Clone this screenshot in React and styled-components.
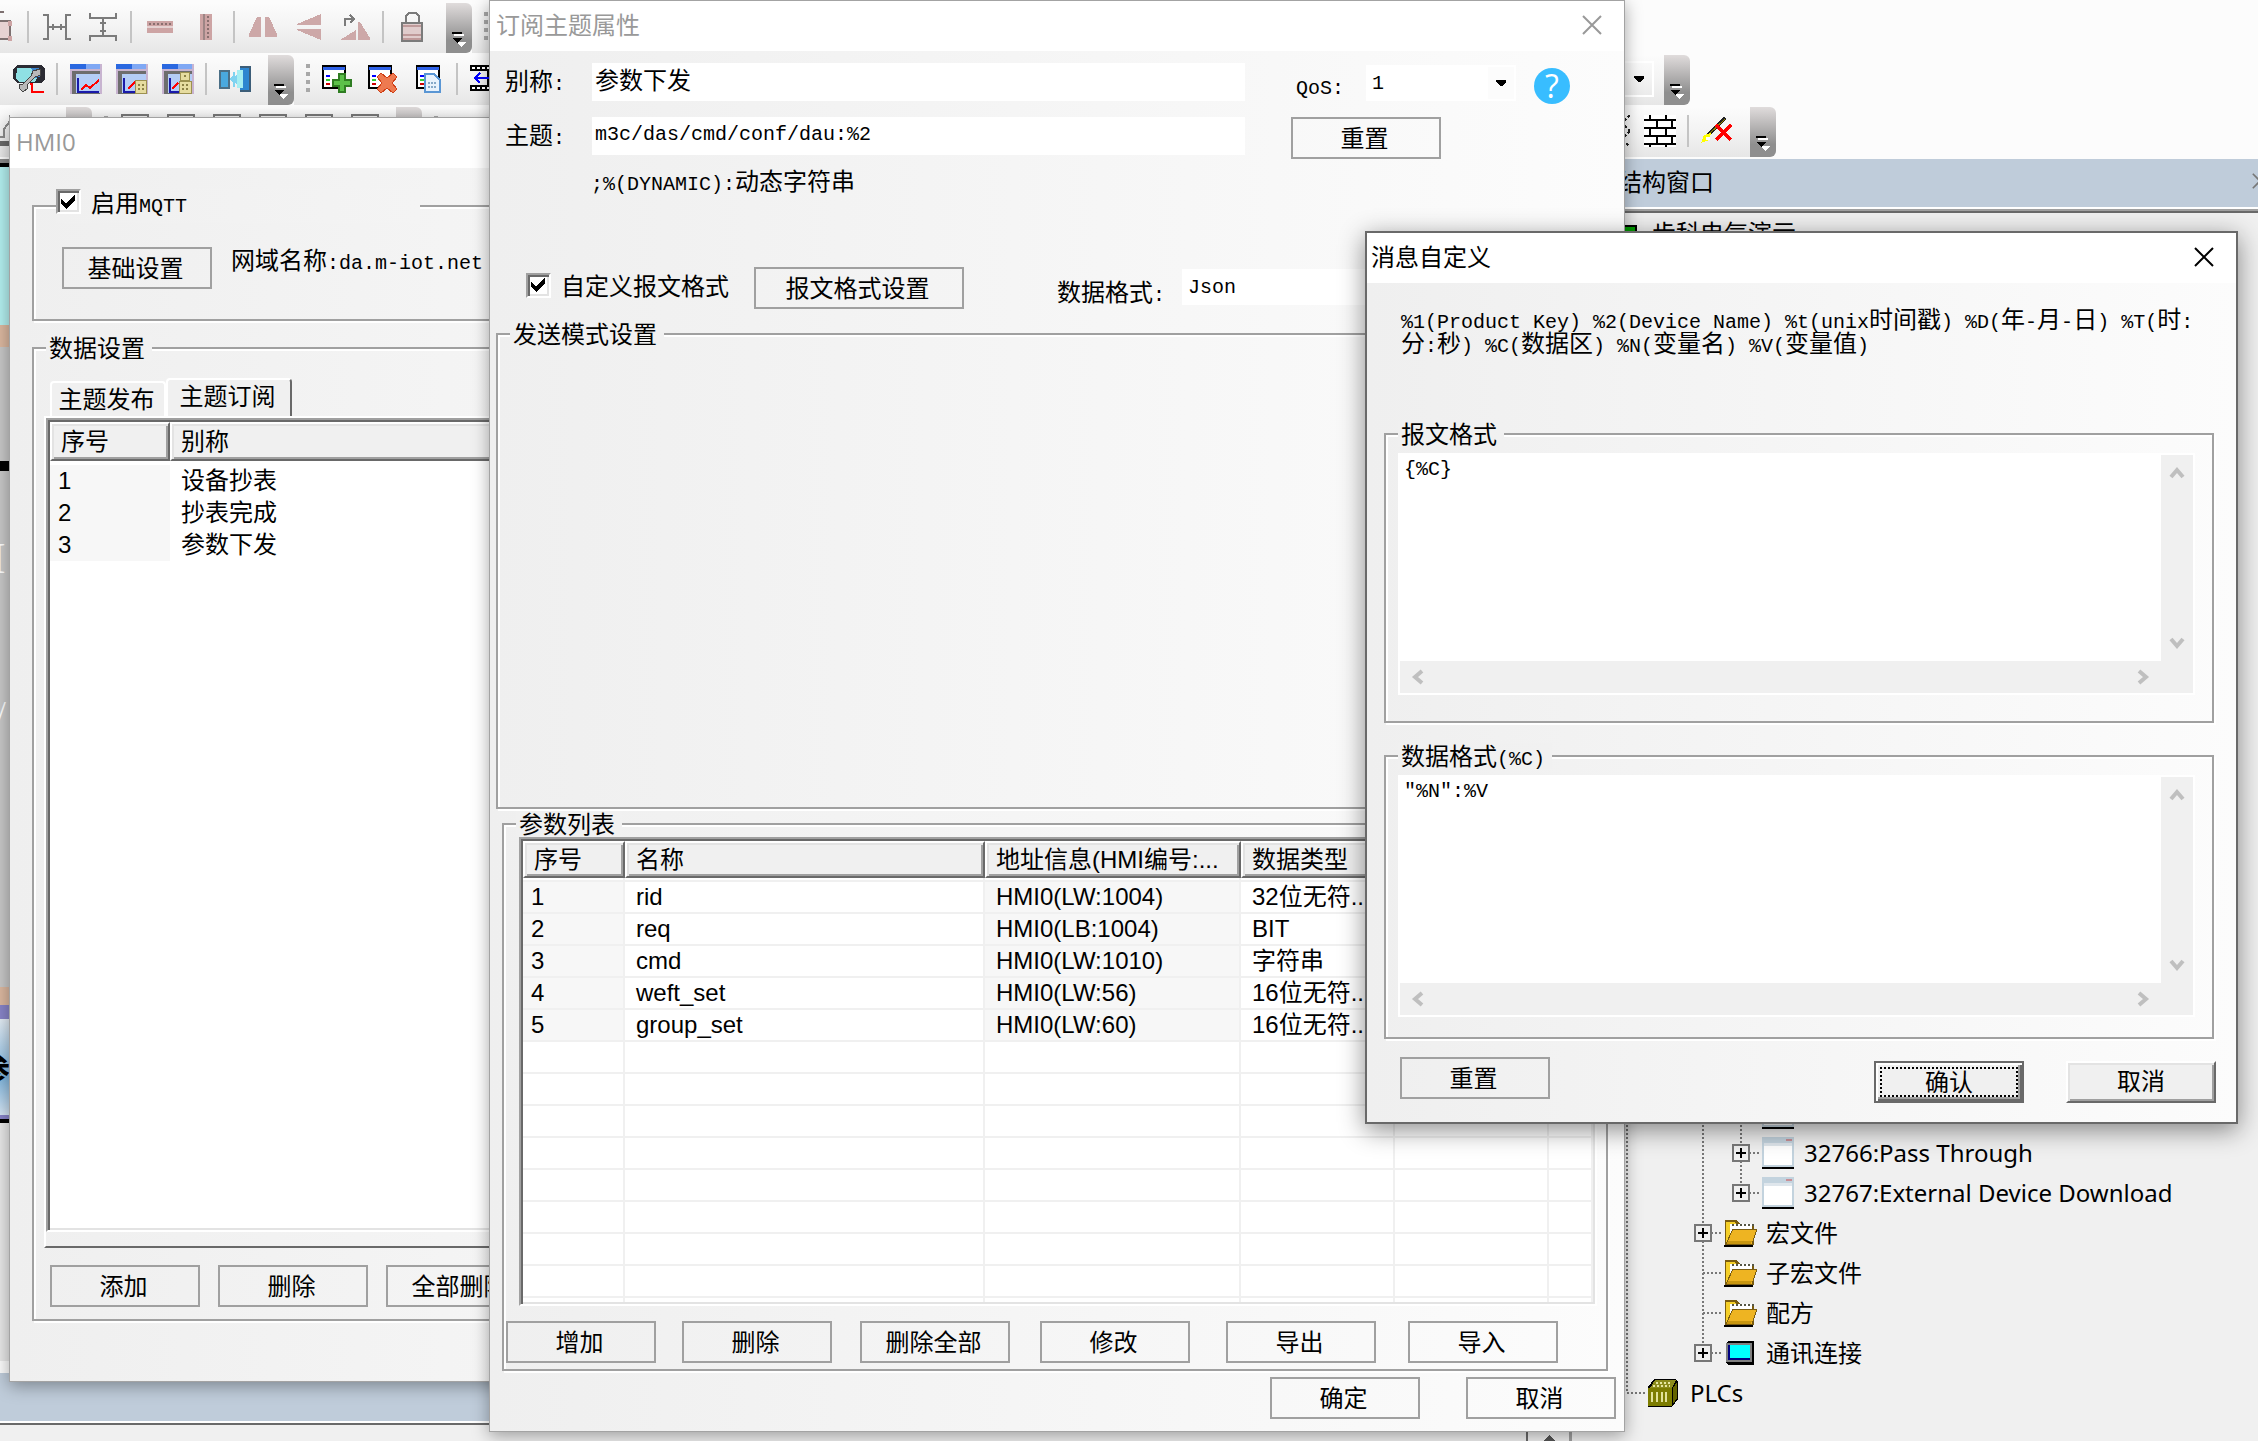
import React from "react";
import styled, { createGlobalStyle, css } from "styled-components";

const cjk = `"Noto Sans CJK SC", sans-serif`;

const GlobalStyle = createGlobalStyle`
  * {
    box-sizing: border-box;
  }

  body {
    margin: 0;
    overflow: hidden;
    background: #fcfcfc;
    color: #000;
    font: 24px/24px ${cjk};
  }

  button,
  input,
  select,
  textarea {
    font: inherit;
    color: inherit;
    margin: 0;
    padding: 0;
    border: 0;
    border-radius: 0;
  }

  svg {
    display: block;
    flex: none;
  }
`;

// half-width characters take exactly half of a 24px full-width cell
const Half = styled.span`
  font-family: "Liberation Mono", monospace;
  font-size: 20px;
  line-height: 0;
`;

const T = ({ children }) => (
  <span>
    {children
      .split(/([\x20-\x7e]+)/)
      .map((part, i) => (i % 2 ? <Half key={i}>{part}</Half> : part))}
  </span>
);

/* ---------- icons ---------- */

const Icon = ({ w = 32, h = 32, children }) => (
  <svg
    width={w}
    height={h}
    viewBox={`0 0 ${w} ${h}`}
    shapeRendering="crispEdges"
    aria-hidden="true"
  >
    {children}
  </svg>
);

const LockEdge = () => (
  <Icon w={23} h={32}>
    <path d="M0 1h4M0 10h10v18H0" fill="#e6d2d2" stroke="#7d7070" strokeWidth="2" />
    <path d="M8 10h4v5H8zM8 25h4v5H8z" fill="#cda4a4" />
  </Icon>
);

const SameWidth = () => (
  <Icon w={28} h={28}>
    <path
      d="M0 2h5v24H0M28 2h-5v24h5M5 14h18M10 11v6M18 11v6"
      fill="none"
      stroke="#7b7b7b"
      strokeWidth="2"
    />
  </Icon>
);

const SameHeight = () => (
  <Icon w={28} h={28}>
    <path
      d="M1 0v5h26V0M1 28v-5h26v5M14 5v18M11 10h6M11 18h6"
      fill="none"
      stroke="#7b7b7b"
      strokeWidth="2"
    />
  </Icon>
);

const RulerH = () => (
  <Icon w={26} h={12}>
    <path d="M0 0h26v12H0z" fill="#cda4a4" />
    <path d="M2 3h22" stroke="#8a6f6f" strokeWidth="2" strokeDasharray="2 2" />
    <path d="M0 5h26v2H0z" fill="#e6d2d2" />
  </Icon>
);

const RulerV = () => (
  <Icon w={12} h={26}>
    <path d="M0 0h12v26H0z" fill="#cda4a4" />
    <path d="M8 2v22" stroke="#8a6f6f" strokeWidth="2" strokeDasharray="2 2" />
    <path d="M4 0v26" stroke="#9d8585" strokeWidth="2" />
  </Icon>
);

const FlipH = () => (
  <Icon w={28} h={20}>
    <path d="M8 0h4v20H0v-3zM16 0h4l8 17v3H16z" fill="#cda8a8" />
  </Icon>
);

const FlipV = () => (
  <Icon w={24} h={26}>
    <path d="M24 0v11H0v-1zM24 26V15H0v1z" fill="#cda8a8" />
  </Icon>
);

const Rotate = () => (
  <Icon w={30} h={26}>
    <path d="M18 8h2l10 16v2H18zM0 26l16-10v10z" fill="#cda8a8" />
    <path d="M5 12V5h9M10 1l4 4-4 4" fill="none" stroke="#7b7b7b" strokeWidth="2" />
  </Icon>
);

const Lock = () => (
  <Icon w={22} h={30}>
    <path d="M5 11V4l3-3h7l3 3v7" fill="none" stroke="#7b7b7b" strokeWidth="2" />
    <path d="M1 11h20v18H1z" fill="#e0cccc" stroke="#7b7b7b" strokeWidth="2" />
    <path d="M2 14h18M2 23h18M2 27h18" stroke="#bf9a9a" strokeWidth="2" />
  </Icon>
);

const MonitorTool = () => (
  <Icon w={32} h={30}>
    <path d="M4 1h24l4 4v10l-4 4H4l-4-4V5z" fill="#2b2b33" />
    <path d="M4 4h20l3 3-5 11H6l-3-4z" fill="#8fe0e4" />
    <path d="M18 4h8l2 8-6 2z" fill="#3d86cf" />
    <path d="M27 5l-7 2-2 5-8 8H6v4l4 4 4-3v-4l8-8 6-2z" fill="#b9b9b9" stroke="#444" />
    <path d="M17 20h2v8h12" fill="none" stroke="#f00" strokeWidth="2" />
  </Icon>
);

const ChartBase = ({ line }) => (
  <>
    <path d="M0 0h32v30H0z" fill="#c8b4d0" />
    <path d="M0 0h30v5H0z" fill="#2a68e0" />
    <path d="M16 0h14v5H16z" fill="#7fa8f4" />
    <path d="M2 7h28v23H2z" fill="#6d6d6d" />
    <path d="M6 10h24v19H6z" fill="#b4cdf6" />
    <path d="M8 14v14h21" fill="none" stroke="#1a1aaa" strokeWidth="2" />
    <path d={line} fill="none" stroke="#f00" strokeWidth="2" />
  </>
);

const Chart = () => (
  <Icon w={32} h={30}>
    <ChartBase line="M11 26l5-5 4 3 9-8" />
  </Icon>
);

const ChartPad = () => (
  <Icon w={32} h={30}>
    <ChartBase line="M12 25l7-7" />
    <path d="M19 16h11v13H19z" fill="#e6dca0" stroke="#9c9150" />
    <path d="M22 20h2v2h-2zM26 20h2v2h-2zM22 24h2v2h-2zM26 24h2v2h-2z" fill="#8c8146" />
  </Icon>
);

const ChartPads = () => (
  <Icon w={32} h={30}>
    <ChartBase line="M10 25l6-6" />
    <path d="M18 8h9v8h-9zM17 17h12v12H17z" fill="#e6dca0" stroke="#9c9150" />
    <path d="M22 11h2v2h-2zM20 20h2v2h-2zM24 20h2v2h-2zM20 24h2v2h-2zM24 24h2v2h-2z" fill="#8c8146" />
  </Icon>
);

const Transfer = () => (
  <Icon w={32} h={26}>
    <path d="M1 5h9v17H1z" fill="#49a9df" stroke="#4b6f86" strokeWidth="2" />
    <path d="M10 13l4-3v-4h2v4l7-6v19l-7-6v4h-2v-4z" fill="#7fd3f0" />
    <path d="M21 1h10v24H21" fill="#2d86d0" stroke="#3c5d78" strokeWidth="2" />
    <path d="M18 4h6v18h-6z" fill="#a5eef2" />
  </Icon>
);

const TableBase = () => (
  <>
    <path d="M1 1h22v22H1z" fill="#fff" stroke="#000" strokeWidth="2" />
    <path d="M1 2h22v3H1z" fill="#2f62e8" />
    <path d="M4 11h4" stroke="#00f" strokeWidth="2" />
    <path d="M4 15h4" stroke="#3c3" strokeWidth="2" />
    <path d="M4 19h4" stroke="#c00" strokeWidth="2" />
  </>
);

const TableAdd = () => (
  <Icon w={30} h={28}>
    <TableBase />
    <path d="M17 9h6v6h6v6h-6v6h-6v-6h-6v-6h6z" fill="#5cc04a" stroke="#2f7d22" strokeWidth="2" />
  </Icon>
);

const TableDelete = () => (
  <Icon w={30} h={28}>
    <TableBase />
    <path
      d="M9 12l4-4 6 5 6-5 4 4-5 6 5 6-4 4-6-5-6 5-4-4 5-6z"
      fill="#ee7a50"
      stroke="#cf3f16"
    />
  </Icon>
);

const TableCopy = () => (
  <Icon w={26} h={28}>
    <TableBase />
    <path d="M9 9h9l6 6v12H9z" fill="#e8f2fc" stroke="#5a96d4" strokeWidth="2" />
    <path d="M12 18h9M12 22h9" stroke="#86a9c8" strokeWidth="2" strokeDasharray="2 1" />
  </Icon>
);

const Film = () => (
  <Icon w={32} h={28}>
    <path d="M0 0h32v6H0zM0 20h32v6H0zM17 6h2v14h-2z" fill="#000" />
    <path d="M2 3h30M2 23h30" stroke="#fff" strokeWidth="2" strokeDasharray="3 2" />
    <path d="M4 13h24M10 8l-5 5 5 5" fill="none" stroke="#00f" strokeWidth="2" />
  </Icon>
);

const LetterStroke = () => (
  <Icon w={10} h={32}>
    <path d="M10 0v6L4 14v8H0" fill="none" stroke="#8c8c8c" strokeWidth="2" />
    <path d="M0 26h10v5H0z" fill="#6a6a6a" />
  </Icon>
);

const GreyBox = () => (
  <Icon w={28} h={34}>
    <path d="M1 1h26v22H1z" fill="none" stroke="#7b7b7b" strokeWidth="2" />
  </Icon>
);

const Hatch = () => (
  <Icon w={32} h={32}>
    <path
      d="M0 0l32 32M16 0l16 16M0 16l16 16M32 0L0 32M16 0L0 16M32 16L16 32"
      stroke="#222"
      strokeWidth="2"
      strokeDasharray="3 2"
    />
  </Icon>
);

const Bricks = () => (
  <Icon w={32} h={32}>
    <path d="M0 0h32v32H0z" fill="#fff" />
    <path
      d="M0 5h32M0 13h32M0 21h32M0 29h32M6 0v5M22 0v5M13 5v8M28 5v8M6 13v8M22 13v8M13 21v8M28 21v8M6 29v3M22 29v3"
      stroke="#000"
      strokeWidth="2"
    />
  </Icon>
);

const WandX = () => (
  <Icon w={34} h={28}>
    <path d="M8 18L25 1" stroke="#222" strokeWidth="4" />
    <path d="M9 17L25 2" stroke="#9a8a00" strokeWidth="1" />
    <path d="M1 26l3-8 7-2-2 7z" fill="#ff0" />
    <path d="M6 20h4v3H6z" fill="#fff" />
    <path d="M16 8l15 15M31 8L16 23" stroke="#f00" strokeWidth="4" />
  </Icon>
);

const Overflow = () => (
  <Icon w={16} h={18}>
    <path d="M3 3h10v2H3zM5 11h10l-5 5z" fill="#fff" />
    <path d="M1 1h10v2H1zM1 7h10l-5 5z" fill="#000" />
  </Icon>
);

const Cross = ({ size = 20, color = "#999" }) => (
  <svg width={size} height={size} viewBox="0 0 20 20" aria-hidden="true">
    <path d="M1 1l18 18M19 1L1 19" stroke={color} strokeWidth="2" />
  </svg>
);

const Arrow = () => (
  <Icon w={10} h={6}>
    <path d="M0 0h10v2L6 6H4L0 2z" fill="#000" />
  </Icon>
);

const Chevron = ({ d }) => (
  <svg width="16" height="16" viewBox="0 0 16 16" aria-hidden="true">
    <path d={d} fill="none" stroke="#bfbfbf" strokeWidth="4" />
  </svg>
);

const Folder = () => (
  <Icon w={34} h={28}>
    <path d="M1 1h12l3 4h14v21H1z" fill="#7a5c10" />
    <path d="M2 3h9l3 4v18H2z" fill="#f5cf28" />
    <path d="M6 5h22v9H6z" fill="#fff" />
    <path d="M8 6h22" stroke="#554" strokeWidth="2" strokeDasharray="2 2" />
    <path d="M9 10h24l-5 15H2z" fill="#eeb422" stroke="#7a5c10" />
    <path d="M4 22h24l-1 3H3z" fill="#c8960f" />
    <path d="M0 26h29v2H0z" fill="#000" />
  </Icon>
);

const Page = () => (
  <Icon w={32} h={32}>
    <path d="M0 0h32v30H0z" fill="#c3d3de" />
    <path d="M24 2h6v2h-6z" fill="#c98f96" />
    <path d="M2 6h28v3H2z" fill="#dfe6ec" />
    <path d="M2 9h28v19H2z" fill="#fff" />
    <path d="M0 30h32v2H0z" fill="#000" />
  </Icon>
);

const Screen = () => (
  <Icon w={32} h={24}>
    <path d="M4 0h26v24H4L2 21V2z" fill="#000" />
    <path d="M2 2h26v19H2z" fill="#808080" />
    <path d="M4 4h22v15H4z" fill="#000080" />
    <path d="M6 4h20v13H6z" fill="#0ff" />
  </Icon>
);

const Plc = () => (
  <Icon w={30} h={28}>
    <path d="M6 0h22l2 3v17l-6 8H0V8z" fill="#000" />
    <path d="M7 1h21l-4 8H2z" fill="#8c8c1c" />
    <path d="M8 4h16M5 7h17" stroke="#e8e8a0" strokeWidth="2" strokeDasharray="2 2" />
    <path d="M0 9h24v18H0z" fill="#7d7d00" />
    <path d="M4 13v10M9 13v10M14 13v10M18 13v10" stroke="#e2e29a" strokeWidth="2" />
    <path d="M25 9l4-6v16l-4 6z" fill="#636300" />
  </Icon>
);

const GreenBlock = () => (
  <Icon w={30} h={16}>
    <path d="M0 1h26v15H0z" fill="#00a800" stroke="#000" strokeWidth="2" />
  </Icon>
);

/* ---------- main frame ---------- */

const Frame = styled.div`
  height: 100vh;
  display: grid;
  grid-template-rows: 159px 1fr;
  overflow: hidden;
  position: relative;
`;

const Toolbars = styled.div`
  display: grid;
  grid-template-rows: repeat(3, 52px);
  padding-top: 3px;
`;

const ToolRow = styled.div`
  display: flex;
  min-width: 0;
`;

const Bar = styled.div`
  width: ${(p) => p.$width}px;
  flex: none;
  height: 50px;
  display: flex;
  align-items: center;
  padding-left: ${(p) => p.$start || 0}px;
  padding-bottom: 2px;
  background: linear-gradient(#fcfcfc, #f3f3f3 50%, #e6e6e6);
  border-radius: 0 8px 8px 0;
`;

const Tool = styled.button`
  width: 46px;
  height: 46px;
  display: grid;
  place-items: center;
  background: none;
`;

const Separator = styled.span`
  width: 2px;
  height: 32px;
  margin: 0 5px 0 4px;
  background: #c4c4c4;
`;

const Handle = styled.span`
  width: 4px;
  height: 30px;
  margin: 0 4px 0 12px;
  background: repeating-linear-gradient(#a8a8a8 0 4px, transparent 4px 8px);
`;

const Push = styled.div`
  margin-left: auto;
  padding-right: 10px;
  display: flex;
  align-items: center;
`;

const Grip = styled.button`
  width: 26px;
  height: 50px;
  margin: 0 0 -2px auto;
  display: flex;
  justify-content: center;
  align-items: flex-end;
  padding-bottom: 4px;
  border-radius: 0 6px 6px 0;
  background: linear-gradient(#e0dcdc, #8f8f8f 75%);

  ${Push} + & {
    margin-left: 0;
  }
`;

const ComboEnd = styled.span`
  width: 40px;
  height: 36px;
  display: flex;
  align-items: center;
  justify-content: flex-end;
  padding-right: 8px;
  border: 2px solid #fff;
`;

const Workspace = styled.main`
  display: grid;
  grid-template-columns: 1fr 686px;
  min-height: 0;
`;

const Stage = styled.div`
  display: flex;
  flex-direction: column;
  min-height: 0;
`;

const Canvas = styled.div`
  flex: 1;
  min-height: 0;
  background: #e8e8e8;
`;

const Stripe = styled.div`
  height: ${(p) => p.$h}px;
  display: flex;
  align-items: center;
  overflow: hidden;
  background: ${(p) => p.$fill};
`;

const CanvasText = styled.span`
  margin-left: -${(p) => p.$shift}px;
  color: ${(p) => p.$color};
  font: ${(p) => p.$font};
`;

const DockTitle = styled.div`
  height: 48px;
  background: #bfccda;
`;

const Output = styled.div`
  height: 20px;
  display: flex;
  justify-content: flex-end;
  border-top: 2px solid #fff;
  box-shadow: inset 0 2px 0 #696969;
  background: #f0f0f0;
`;

const OutputScroll = styled.div`
  width: 46px;
  height: 18px;
  display: flex;
  justify-content: center;
  align-items: flex-end;
  border-left: 2px solid #696969;
  border-right: 3px solid #a0a0a0;
`;

const Panel = styled.aside`
  min-width: 0;
  overflow: hidden;
  background: #f0f0f0;
`;

const PanelTitle = styled.header`
  height: 48px;
  display: flex;
  align-items: center;
  justify-content: space-between;
  padding: 0 0 4px 46px;
  margin-right: -10px;
  background: #bfccda;
`;

const Tree = styled.ul`
  margin: 0;
  padding: 4px 0 0 36px;
  list-style: none;
  border-top: 2px solid #fff;
  box-shadow: inset 0 2px 0 #a0a0a0, inset 0 4px 0 #696969;
  font-family: "Noto Sans", ${cjk};
`;

const TreeRow = styled.li`
  height: 40px;
  display: flex;
  align-items: center;
  white-space: nowrap;
`;

const dotsV = "repeating-linear-gradient(#777 0 2px, transparent 2px 4px)";
const dotsH = "repeating-linear-gradient(90deg, #777 0 2px, transparent 2px 4px)";

const guides = {
  " ": "none",
  "|": `${dotsV} center / 2px 100% no-repeat`,
  "+": `${dotsV} center / 2px 100% no-repeat, ${dotsH} right center / 50% 2px no-repeat`,
  L: `${dotsV} top center / 2px 50% no-repeat, ${dotsH} right center / 50% 2px no-repeat`,
};

const Guide = styled.span`
  width: 38px;
  height: 40px;
  display: grid;
  place-items: center;
  background: ${(p) => guides[p.$kind]};
`;

const Expander = styled.button`
  width: 18px;
  height: 18px;
  border: 2px solid #777;
  background: linear-gradient(#000, #000) center / 10px 2px no-repeat,
    linear-gradient(#000, #000) center / 2px 10px no-repeat, #f0f0f0;
`;

const TreeIcon = styled.span`
  width: 34px;
  margin: 0 8px 0 2px;
  display: grid;
  place-items: center start;
`;

/* ---------- windows ---------- */

const Window = styled.section`
  position: absolute;
  left: ${(p) => p.$x}px;
  top: ${(p) => p.$y}px;
  width: ${(p) => p.$w}px;
  border: 1px solid #a3a3a3;
  background: linear-gradient(90deg, #efefef, #fcfcfc);
  box-shadow: 0 4px 16px rgba(0, 0, 0, 0.35);

  ${(p) =>
    p.$active &&
    css`
      border: 2px solid #696969;
      box-shadow: 0 6px 24px rgba(0, 0, 0, 0.45);
    `}
`;

const TitleBar = styled.header`
  height: 50px;
  display: flex;
  align-items: center;
  justify-content: space-between;
  padding: 0 22px 2px ${(p) => (p.$active ? 4 : 6)}px;
  background: #fff;
  color: ${(p) => (p.$active ? "#000" : "#999")};
  font-family: "Open Sans", ${cjk};

  h2 {
    margin: 0;
    font-size: 24px;
    font-weight: 400;
  }
`;

const Close = styled.button`
  display: grid;
  background: none;
`;

const Group = styled.fieldset`
  min-width: 0;
  margin: ${(p) => p.$margin};
  padding: 0;
  height: ${(p) => p.$h}px;
  border: 2px solid #a0a0a0;
  box-shadow: 2px 2px 0 #fff, inset 2px 2px 0 #fff;
`;

const Legend = styled.legend`
  height: ${(p) => (p.$tall ? 34 : 26)}px;
  width: ${(p) => (p.$tall ? "364px" : "auto")};
  margin-left: ${(p) => p.$left}px;
  padding: ${(p) => (p.$tall ? 0 : "0 7px 0 3px")};
  background: linear-gradient(90deg, #f0f0f0, ${(p) => (p.$tall ? "#f4f4f4" : "#f1f1f1")});
`;

const Button = styled.button`
  width: ${(p) => p.$w || 150}px;
  height: 42px;
  flex: none;
  white-space: nowrap;
  padding: 0 3px 3px 0;
  background: none;
  border: 2px solid #a0a0a0;
`;

const BevelButton = styled(Button)`
  margin-top: 4px;
  padding: 4px;
  background: #f0f0f0;
  border-color: #fff #696969 #696969 #fff;
  box-shadow: inset 2px 2px 0 #e3e3e3, inset -2px -2px 0 #a0a0a0;

  ${(p) =>
    p.$default &&
    css`
      border-color: #696969;
      box-shadow: inset 2px 2px 0 #fff, inset -2px -2px 0 #696969,
        inset -4px -4px 0 #a0a0a0;
    `}

  span {
    display: block;
    height: 30px;
    line-height: 26px;
    ${(p) => p.$default && "line-height: 24px; border: 2px dotted #000;"}
  }
`;

const CheckLabel = styled.label`
  height: ${(p) => p.$h}px;
  display: flex;
  align-items: center;
  gap: 10px;
  white-space: nowrap;
`;

const CheckBox = styled.span`
  display: grid;
  place-items: center;

  > * {
    grid-area: 1 / 1;
  }

  input {
    appearance: none;
    width: 25px;
    height: 25px;
    background: #fff;
    border: 2px solid;
    border-color: #a0a0a0 #fff #fff #a0a0a0;
    box-shadow: inset 2px 2px 0 #696969, inset -2px -2px 0 #e3e3e3;
  }

  svg {
    pointer-events: none;
  }
`;

const Check = ({ h, children }) => (
  <CheckLabel $h={h}>
    <CheckBox>
      <input type="checkbox" defaultChecked />
      <Icon w={15} h={14}>
        <path d="M0 4l5 4 9-8v5l-9 9-5-5z" fill="#000" />
      </Icon>
    </CheckBox>
    <T>{children}</T>
  </CheckLabel>
);

const Row = styled.div`
  display: flex;
  align-items: flex-start;
  gap: ${(p) => p.$gap || 0}px;
  padding: ${(p) => p.$pad || 0};
`;

const TabRow = styled.div`
  display: flex;
  align-items: flex-end;
  padding: 17px 0 0 16px;
`;

const Tab = styled.button`
  width: 116px;
  height: 35px;
  padding: 0 3px 3px 0;
  background: #f0f0f0;
  border: 2px solid #fff;
  border-bottom: 0;
  border-radius: 4px 4px 0 0;

  ${(p) =>
    p.$on &&
    css`
      width: 126px;
      height: 38px;
      padding-bottom: 7px;
      border-right-color: #696969;
    `}
`;

const TabPanel = styled.div`
  margin-left: 10px;
  height: 832px;
  border: 2px solid #fff;
  border-bottom-color: #696969;
`;

const ListView = styled.div`
  height: ${(p) => p.$h}px;
  padding: 2px;
  background: #fff;
  border: 2px solid;
  border-color: #a0a0a0 #fff #fff #a0a0a0;
  box-shadow: inset 2px 2px 0 #696969, inset -2px -2px 0 #e3e3e3;
  ${(p) => p.$inset && "width: 1078px; margin-left: 15px;"}
`;

const ListClip = styled.div`
  height: 100%;
  overflow: hidden;
`;

const List = styled.table`
  width: 100%;
  table-layout: fixed;
  border-spacing: 0;
  font-family: "Liberation Sans", ${cjk};
  white-space: nowrap;

  th {
    height: ${(p) => (p.$lined ? 37 : 39)}px;
    padding: 0 0 0 9px;
    font-weight: 400;
    text-align: left;
    background: #f0f0f0;
    border: 2px solid;
    border-color: #fff #696969 #696969 #fff;
    box-shadow: inset 2px 2px 0 #e3e3e3, inset -2px -2px 0 #a0a0a0;
  }

  td {
    height: 32px;
    padding: 0 0 0 11px;
    overflow: hidden;
  }

  td:first-child {
    padding-left: 8px;
  }

  tr.lead td {
    height: 4px;
  }

  ${(p) =>
    p.$lined &&
    css`
      td {
        border: solid #f0f0f0;
        border-width: 0 2px 2px 0;
      }
    `}

  tr.item td:first-child,
  tr.item td:nth-child(3) {
    background: #f7f7f7;
  }
`;

const TopForm = styled.div`
  display: grid;
  grid-template-columns: 86px 654px 46px 1fr;
  grid-template-rows: 54px 51px 33px;
  padding: 12px 0 0 15px;

  > label {
    line-height: 34px;
  }
`;

const TextBox = styled.input`
  height: 38px;
  margin-left: 1px;
  padding: 0 3px ${(p) => (p.$half ? 4 : 8)}px;
  background: #fff;
  ${(p) => p.$half && `font: 20px "Liberation Mono", monospace;`}
`;

const Hint = styled.div`
  grid-column: 2 / 4;
`;

const QosRow = styled.div`
  height: 38px;
  display: flex;
  align-items: center;
  padding-left: 5px;

  label {
    padding-top: 4px;
  }
`;

const SelectWrap = styled.div`
  width: ${(p) => p.$w}px;
  height: 36px;
  margin: 2px 18px 0 ${(p) => p.$gap}px;
  display: grid;
  align-items: center;
  background: #fff;
  border: 2px solid #fff;

  > * {
    grid-area: 1 / 1;
  }

  select {
    appearance: none;
    height: 32px;
    padding-left: 4px;
    background: linear-gradient(#fcfcfc, #fcfcfc) right / 26px 100% no-repeat;
    font: 20px "Liberation Mono", monospace;
  }

  svg {
    justify-self: end;
    margin-right: 8px;
    pointer-events: none;
  }
`;

const Select = ({ id, w, gap, value }) => (
  <SelectWrap $w={w} $gap={gap}>
    <select id={id} defaultValue={value}>
      <option>{value}</option>
    </select>
    <Arrow />
  </SelectWrap>
);

const Help = styled.button`
  width: 36px;
  height: 36px;
  margin-top: 8px;
  border-radius: 50%;
  background: #38bdff;
  color: #fff;
  font: 32px/36px "Open Sans", sans-serif;
`;

const FieldLabel = styled.label`
  line-height: 48px;
  margin-left: 93px;
  white-space: nowrap;
`;

const ButtonGrid = styled.div`
  display: grid;
  grid-template-columns: 176px 178px 180px 186px 182px 150px;
  padding: 15px 0 0 2px;
`;

const Footer = styled.div`
  display: flex;
  align-items: flex-start;
  justify-content: flex-end;
  gap: ${(p) => p.$gap}px;
  padding: ${(p) => p.$pad};

  > :first-child {
    margin-right: ${(p) => (p.$split ? "auto" : 0)};
  }
`;

const Note = styled.p`
  width: 800px;
  height: 115px;
  margin: 23px 0 0 34px;
  word-break: break-all;
`;

const Editor = styled.div`
  display: grid;
  grid-template: 206px 32px / 1fr 32px;
  width: 797px;
  margin: 6px 0 0 12px;
  border: 2px solid #fff;
  background: #f0f0f0;

  textarea {
    resize: none;
    overflow: hidden;
    padding: 3px 4px;
    background: #fff;
    outline: none;
    font: 20px/24px "Liberation Mono", monospace;
  }
`;

const ScrollTrack = styled.div`
  display: flex;
  flex-direction: ${(p) => (p.$vertical ? "column" : "row")};
  justify-content: space-between;
  align-items: center;
  padding: ${(p) => (p.$vertical ? "10px 0" : "0 10px")};
`;

/* ---------- data ---------- */

const treeRows = [
  { guides: "", icon: <GreenBlock />, label: "步科电气演示" },
  ...Array.from({ length: 21 }, () => ({ guides: "| ||" })),
  { guides: "| |+", icon: <Page /> },
  { guides: "| |+", plus: true, icon: <Page />, label: "32766:Pass Through" },
  { guides: "| |L", plus: true, icon: <Page />, label: "32767:External Device Download" },
  { guides: "| +", plus: true, icon: <Folder />, label: "宏文件" },
  { guides: "| +", icon: <Folder />, label: "子宏文件" },
  { guides: "| +", icon: <Folder />, label: "配方" },
  { guides: "| L", plus: true, icon: <Screen />, label: "通讯连接" },
  { guides: "L", icon: <Plc />, label: "PLCs" },
];

const topics = ["设备抄表", "抄表完成", "参数下发"];

const params = [
  ["1", "rid", "HMI0(LW:1004)", "32位无符..."],
  ["2", "req", "HMI0(LB:1004)", "BIT"],
  ["3", "cmd", "HMI0(LW:1010)", "字符串"],
  ["4", "weft_set", "HMI0(LW:56)", "16位无符..."],
  ["5", "group_set", "HMI0(LW:60)", "16位无符..."],
];

const cols = [0, 1, 2, 3, 4, 5];

/* ---------- parts ---------- */

const AppToolbars = () => (
  <Toolbars>
    <ToolRow>
      <Bar $width={472}>
        <LockEdge />
        <Separator />
        <Tool aria-label="等宽"><SameWidth /></Tool>
        <Tool aria-label="等高"><SameHeight /></Tool>
        <Separator />
        <Tool aria-label="横尺"><RulerH /></Tool>
        <Tool aria-label="竖尺"><RulerV /></Tool>
        <Separator />
        <Tool aria-label="水平翻转"><FlipH /></Tool>
        <Tool aria-label="垂直翻转"><FlipV /></Tool>
        <Tool aria-label="旋转"><Rotate /></Tool>
        <Separator />
        <Tool aria-label="锁定"><Lock /></Tool>
        <Grip aria-label="更多"><Overflow /></Grip>
      </Bar>
      <Bar $width={300}>
        <Handle />
      </Bar>
    </ToolRow>
    <ToolRow>
      <Bar $width={294} $start={6}>
        <Tool aria-label="设置"><MonitorTool /></Tool>
        <Separator />
        <Tool aria-label="趋势图"><Chart /></Tool>
        <Tool aria-label="趋势图按键"><ChartPad /></Tool>
        <Tool aria-label="趋势图双按键"><ChartPads /></Tool>
        <Separator />
        <Tool aria-label="传输"><Transfer /></Tool>
        <Grip aria-label="更多"><Overflow /></Grip>
      </Bar>
      <Bar $width={1396}>
        <Handle />
        <Tool aria-label="新增窗口"><TableAdd /></Tool>
        <Tool aria-label="删除窗口"><TableDelete /></Tool>
        <Tool aria-label="复制窗口"><TableCopy /></Tool>
        <Separator />
        <Tool aria-label="上一帧"><Film /></Tool>
        <Push>
          <ComboEnd>
            <Arrow />
          </ComboEnd>
        </Push>
        <Grip aria-label="更多"><Overflow /></Grip>
      </Bar>
    </ToolRow>
    <ToolRow>
      <Bar $width={92}>
        <LetterStroke />
        <Grip aria-label="更多"><Overflow /></Grip>
      </Bar>
      <Bar $width={330}>
        <Handle />
        <Tool><GreyBox /></Tool>
        <Tool><GreyBox /></Tool>
        <Tool><GreyBox /></Tool>
        <Tool><GreyBox /></Tool>
        <Tool><GreyBox /></Tool>
        <Tool><GreyBox /></Tool>
        <Grip aria-label="更多"><Overflow /></Grip>
      </Bar>
      <Bar $width={1354}>
        <Handle />
        <Push>
          <Tool aria-label="斜网格"><Hatch /></Tool>
          <Tool aria-label="网格"><Bricks /></Tool>
          <Separator />
          <Tool aria-label="清除"><WandX /></Tool>
        </Push>
        <Grip aria-label="更多"><Overflow /></Grip>
      </Bar>
    </ToolRow>
  </Toolbars>
);

const StructurePanel = () => (
  <Panel>
    <PanelTitle>
      <span>结构窗口</span>
      <Cross size={16} color="#777" />
    </PanelTitle>
    <Tree>
      {treeRows.map((row, i) => (
        <TreeRow key={i}>
          {row.guides.split("").map((kind, n) => (
            <Guide key={n} $kind={kind}>
              {row.plus && n === row.guides.length - 1 && (
                <Expander aria-label="展开" />
              )}
            </Guide>
          ))}
          {row.icon && <TreeIcon>{row.icon}</TreeIcon>}
          {row.label}
        </TreeRow>
      ))}
    </Tree>
  </Panel>
);

const HmiWindow = () => (
  <Window $x={9} $y={117} $w={1136}>
    <TitleBar>
      <h2>HMI0</h2>
    </TitleBar>
    <Group $margin="21px 24px 0 22px" $h={132}>
      <Legend $tall $left={22}>
        <Check h={25}>启用MQTT</Check>
      </Legend>
      <Row $gap={19} $pad="24px 0 0 28px">
        <Button>基础设置</Button>
        <T>网域名称:da.m-iot.net</T>
      </Row>
    </Group>
    <Group $margin="14px 24px 60px 22px" $h={986}>
      <Legend $left={12}>数据设置</Legend>
      <TabRow role="tablist">
        <Tab role="tab">主题发布</Tab>
        <Tab role="tab" $on>主题订阅</Tab>
      </TabRow>
      <TabPanel>
        <ListView $h={814}>
          <ListClip>
            <List>
              <colgroup>
                <col width="120" />
                <col />
              </colgroup>
              <thead>
                <tr>
                  <th>序号</th>
                  <th>别称</th>
                </tr>
              </thead>
              <tbody>
                <tr className="lead"><td /><td /></tr>
                {topics.map((name, i) => (
                  <tr className="item" key={name}>
                    <td>{i + 1}</td>
                    <td>{name}</td>
                  </tr>
                ))}
              </tbody>
            </List>
          </ListClip>
        </ListView>
      </TabPanel>
      <Row $gap={18} $pad="17px 0 0 16px">
        <Button>添加</Button>
        <Button>删除</Button>
        <Button>全部删除</Button>
      </Row>
    </Group>
  </Window>
);

const TopicWindow = () => (
  <Window $x={489} $y={0} $w={1136}>
    <TitleBar>
      <h2>订阅主题属性</h2>
      <Close aria-label="关闭"><Cross /></Close>
    </TitleBar>
    <TopForm>
      <label htmlFor="alias"><T>别称:</T></label>
      <TextBox id="alias" defaultValue="参数下发" />
      <span />
      <QosRow>
        <label htmlFor="qos"><T>QoS:</T></label>
        <Select id="qos" w={150} gap={22} value="1" />
        <Help aria-label="帮助">?</Help>
      </QosRow>
      <label htmlFor="topic"><T>主题:</T></label>
      <TextBox id="topic" $half defaultValue="m3c/das/cmd/conf/dau:%2" />
      <span />
      <Button>重置</Button>
      <span />
      <Hint><T>;%(DYNAMIC):动态字符串</T></Hint>
    </TopForm>
    <Row $pad="66px 0 0 36px">
      <Check h={36}>自定义报文格式</Check>
      <Row $pad="0 0 0 25px">
        <Button $w={210}>报文格式设置</Button>
      </Row>
      <FieldLabel htmlFor="format"><T>数据格式:</T></FieldLabel>
      <Select id="format" w={260} gap={17} value="Json" />
    </Row>
    <Group $margin="6px 16px 0 6px" $h={488}>
      <Legend $left={12}>发送模式设置</Legend>
    </Group>
    <Group $margin="2px 16px 0 12px" $h={560}>
      <Legend $left={12}>参数列表</Legend>
      <ListView $h={469} $inset>
        <ListClip>
          <List $lined>
            <colgroup>
              <col width="102" />
              <col width="360" />
              <col width="256" />
              <col width="154" />
              <col width="154" />
              <col />
            </colgroup>
            <thead>
              <tr>
                <th>序号</th>
                <th>名称</th>
                <th>地址信息(HMI编号:...</th>
                <th>数据类型</th>
                <th />
                <th />
              </tr>
            </thead>
            <tbody>
              <tr className="lead">{cols.map((c) => <td key={c} />)}</tr>
              {params.map((row) => (
                <tr className="item" key={row[0]}>
                  {cols.map((c) => <td key={c}>{row[c]}</td>)}
                </tr>
              ))}
              {Array.from({ length: 9 }, (_, i) => (
                <tr key={i}>{cols.map((c) => <td key={c} />)}</tr>
              ))}
            </tbody>
          </List>
        </ListClip>
      </ListView>
      <ButtonGrid>
        <Button>增加</Button>
        <Button>删除</Button>
        <Button>删除全部</Button>
        <Button>修改</Button>
        <Button>导出</Button>
        <Button>导入</Button>
      </ButtonGrid>
    </Group>
    <Footer $gap={46} $pad="6px 8px 12px">
      <Button>确定</Button>
      <Button>取消</Button>
    </Footer>
  </Window>
);

const CodeBox = ({ label, value }) => (
  <Editor>
    <textarea aria-label={label} defaultValue={value} spellCheck={false} />
    <ScrollTrack $vertical>
      <Chevron d="M2 12l6-7 6 7" />
      <Chevron d="M2 4l6 7 6-7" />
    </ScrollTrack>
    <ScrollTrack>
      <Chevron d="M12 2l-7 6 7 6" />
      <Chevron d="M4 2l7 6-7 6" />
    </ScrollTrack>
  </Editor>
);

const MessageDialog = () => (
  <Window $active $x={1365} $y={231} $w={873} role="dialog">
    <TitleBar $active>
      <h2>消息自定义</h2>
      <Close aria-label="关闭"><Cross color="#000" /></Close>
    </TitleBar>
    <Note>
      <T>
        %1(Product Key) %2(Device Name) %t(unix时间戳) %D(年-月-日) %T(时:分:秒) %C(数据区) %N(变量名) %V(变量值)
      </T>
    </Note>
    <Group $margin="0 22px 0 17px" $h={302}>
      <Legend $left={12}>报文格式</Legend>
      <CodeBox label="报文格式" value="{%C}" />
    </Group>
    <Group $margin="20px 22px 0 17px" $h={296}>
      <Legend $left={12}><T>数据格式(%C)</T></Legend>
      <CodeBox label="数据格式" value={'"%N":%V'} />
    </Group>
    <Footer $split $gap={42} $pad="18px 20px 19px 33px">
      <Button>重置</Button>
      <BevelButton $default><span>确认</span></BevelButton>
      <BevelButton><span>取消</span></BevelButton>
    </Footer>
  </Window>
);

const App = () => (
  <>
    <GlobalStyle />
    <Frame>
      <AppToolbars />
      <Workspace>
        <Stage>
          <Canvas>
            <Stripe $h={4} $fill="#8a8a8a" />
            <Stripe $h={4} $fill="#000" />
            <Stripe $h={158} $fill="#b4f0f0" />
            <Stripe $h={22} $fill="#dcb8a0" />
            <Stripe $h={114} $fill="#c8c8c8" />
            <Stripe $h={10} $fill="#000" />
            <Stripe $h={68} $fill="#c8c8c8" />
            <Stripe $h={40} $fill="#c8c8c8">
              <CanvasText $shift={9} $color="#fff" $font={`44px/40px "Liberation Serif", serif`}>
                I
              </CanvasText>
            </Stripe>
            <Stripe $h={110} $fill="#c8c8c8" />
            <Stripe $h={46} $fill="#c8c8c8">
              <CanvasText $shift={3} $color="#fff" $font={`32px/40px "Liberation Serif", serif`}>
                /
              </CanvasText>
            </Stripe>
            <Stripe $h={252} $fill="#c8c8c8" />
            <Stripe $h={18} $fill="#dcb8a0" />
            <Stripe $h={14} $fill="#8884c8" />
            <Stripe $h={96} $fill="linear-gradient(#e4edf5, #7fb4dc 60%, #d6e6f4)">
              <CanvasText $shift={22} $color="#000" $font={`700 32px/40px ${cjk}`}>
                参
              </CanvasText>
            </Stripe>
            <Stripe $h={4} $fill="#8884c8" />
            <Stripe $h={4} $fill="#000" />
          </Canvas>
          <Stripe $h={12} $fill="#fcfcfc" />
          <DockTitle />
          <Output>
            <OutputScroll>
              <Icon w={12} h={6}>
                <path d="M6 0l6 6H0z" fill="#555" />
              </Icon>
            </OutputScroll>
          </Output>
        </Stage>
        <StructurePanel />
      </Workspace>
      <HmiWindow />
      <TopicWindow />
      <MessageDialog />
    </Frame>
  </>
);

export default App;
